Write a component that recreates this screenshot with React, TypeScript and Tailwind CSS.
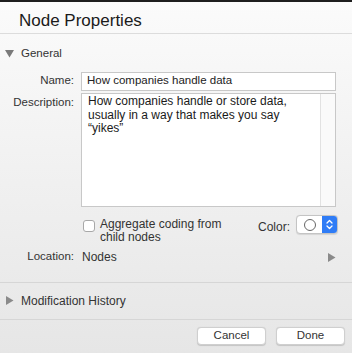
import React from "react";

export default function App() {
  return (
    <div
      className="w-[352px] h-[353px] overflow-hidden flex flex-col bg-gradient-to-b from-[#fbfbfb] to-[#e6e6e6] text-[#262626]"
      style={{ fontFamily: '"Liberation Sans", Arial, sans-serif' }}
    >
      <div className="h-[2px] bg-[#1e1e1e] shrink-0" />
      <div className="h-[32px] shrink-0 border-b border-[#dcdcdc] flex items-center pl-[19px] pt-[7px]">
        <span className="text-[17px] text-[#1a1a1a]">Node Properties</span>
      </div>
      <div className="h-[30px] flex items-center pl-[5px] pt-[10px]">
        <svg width="9" height="8" viewBox="0 0 9 8" className="mr-[7px]">
          <path d="M0 0 L9 0 L4.5 7.5 Z" fill="#7a7a7a" />
        </svg>
        <span className="text-[11.5px] text-[#333]">General</span>
      </div>
      <div className="flex items-center mt-[8px] h-[18px]">
        <div className="w-[76px] text-right pr-[2px] text-[11.5px] text-[#333]">Name:</div>
        <div className="ml-[5px] w-[255px] h-[19px] bg-white border border-[#c8c8c8] flex items-center pl-[5px] text-[11.5px] text-[#222]">
          How companies handle data
        </div>
      </div>
      <div className="flex mt-[3px]">
        <div className="w-[76px] text-right pr-[2px] text-[11.5px] text-[#333] pt-[1px]">Description:</div>
        <div className="ml-[5px] w-[255px] h-[114px] bg-white border border-[#c8c8c8] flex">
          <div className="flex-1 pl-[6px] pr-[14px] pt-[1px] text-[12px] leading-[13.5px] text-[#1a1a1a]">
            How companies handle or store data, usually in a way that makes you say “yikes”
          </div>
          <div className="w-[15px] border-l border-[#e2e2e2] bg-[#fafafa]" />
        </div>
      </div>
      <div className="flex mt-[8px] h-[30px]">
        <div className="w-[83px]" />
        <div className="w-[12px] h-[12px] mt-[5px] bg-white border border-[#a8a8a8] rounded-[3px]" />
        <div className="ml-[5px] text-[12px] leading-[13px] text-[#333] pt-[3px] w-[130px]">
          Aggregate coding from child nodes
        </div>
        <div className="ml-[28px] text-[12px] text-[#333] pt-[3px]">Color:</div>
        <div className="ml-[6px] w-[42px] h-[19px] rounded-[4px] border border-[#c4c4c4] bg-white flex overflow-hidden shadow-[0_0.5px_1px_rgba(0,0,0,0.1)]">
          <div className="flex-1 flex items-center justify-center">
            <div className="w-[12px] h-[12px] rounded-full border border-[#666]" />
          </div>
          <div className="w-[15px] bg-[#2f7cf6] flex items-center justify-center">
            <svg width="7" height="11" viewBox="0 0 7 11">
              <path d="M1 4 L3.5 1.5 L6 4 M1 7 L3.5 9.5 L6 7" stroke="white" strokeWidth="1.3" fill="none" strokeLinecap="round" strokeLinejoin="round" />
            </svg>
          </div>
        </div>
      </div>
      <div className="flex items-center h-[16px] mt-[4px]">
        <div className="w-[76px] text-right pr-[2px] text-[11.5px] text-[#333]">Location:</div>
        <div className="ml-[6px] text-[12px] text-[#333] flex-1">Nodes</div>
        <svg width="8" height="9" viewBox="0 0 8 9" className="mr-[16px]">
          <path d="M0 0 L7.5 4.5 L0 9 Z" fill="#8a8a8a" />
        </svg>
      </div>
      <div className="mt-[17px] border-t border-[#d6d6d6] h-[37px] flex items-center pl-[6px] pb-[1px]">
        <svg width="8" height="9" viewBox="0 0 8 9" className="mr-[7px]">
          <path d="M0 0 L7.5 4.5 L0 9 Z" fill="#8a8a8a" />
        </svg>
        <span className="text-[12px] text-[#333]">Modification History</span>
      </div>
      <div className="border-t border-[#d6d6d6] flex justify-end gap-[10px] pr-[7px] pt-[7px]">
        <div className="w-[69px] h-[18px] rounded-[4px] bg-white border border-[#cfcfcf] shadow-[0_0.5px_1px_rgba(0,0,0,0.15)] flex items-center justify-center text-[11.5px] text-[#333]">
          Cancel
        </div>
        <div className="w-[69px] h-[18px] rounded-[4px] bg-white border border-[#cfcfcf] shadow-[0_0.5px_1px_rgba(0,0,0,0.15)] flex items-center justify-center text-[11.5px] text-[#333]">
          Done
        </div>
      </div>
    </div>
  );
}
